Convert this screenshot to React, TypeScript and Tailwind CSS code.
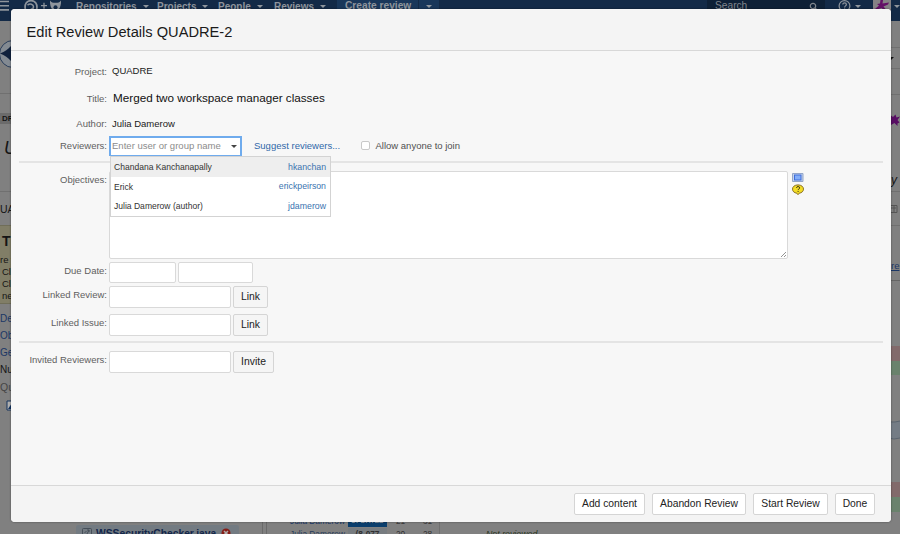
import type { ReactNode } from "react";

function NavItem({ label, className }: { label: string; className: string }) {
  return (
    <div className={`flex shrink-0 items-center gap-[6px] ${className}`}>
      <span>{label}</span>
      <Caret className="border-t-[#8f959c]" />
    </div>
  );
}

function Caret({ className }: { className: string }) {
  return <span className={`h-0 w-0 border-x-[3px] border-t-[3px] border-x-transparent ${className}`} />;
}

function NavBar() {
  return (
    <div className="flex h-[21px] w-full shrink-0 items-start bg-[#132a47] text-[10px] font-bold text-[#8f959c]">
      <div className="flex h-[12px] w-full items-center">
        <svg className="h-[12px] w-[76px] shrink-0" viewBox="0 0 76 12" fill="none" stroke="#8f959c">
          <path d="M0 1.5h9M0 5.7h9M0 9.9h9" strokeWidth="1.6" />
          <path d="M25.5 10C24 4 27 .6 31 .6s7 3.5 5.6 9.4" strokeWidth="1.7" />
          <path d="M27.5 5.2c2.4-2 6-1 6 1.6 0 1.8-1.5 2.5-2.8 2.5" strokeWidth="1.5" />
          <path d="M41 5.7h6M44 2.7v6" strokeWidth="1.3" />
          <path d="M50 .5c1.5 2 2.8 2.3 5.5 2.3S59.500 2.500 61 .5c.3 4-.8 7-2.500 9.500h-6C50.800 7.500 49.700 4.500 50 .5z" fill="#8f959c" stroke="none" />
          <circle cx="55.500" cy="7.200" r="2" fill="#132a47" stroke="none" />
        </svg>
        <NavItem label="Repositories" className="w-[81px]" />
        <NavItem label="Projects" className="w-[61px]" />
        <NavItem label="People" className="w-[56px]" />
        <NavItem label="Reviews" className="w-[63px]" />
        <div className="flex h-[12px] w-[102px] shrink-0 items-center bg-[#19375a]">
          <span className="w-[81px] pl-[8px] text-[10.200px]">Create review</span>
          <span className="flex h-[12px] flex-1 items-center border-l border-[#132a47] pl-[7px]">
            <Caret className="border-t-[#8f959c]" />
          </span>
        </div>
        <div className="ml-[268px] flex h-[12px] w-[118px] shrink-0 items-center justify-between bg-[#0e2036] pr-[7px] pl-[8px] font-normal">
          <span className="text-[10.200px] text-[#81868d]">Search</span>
          <svg className="h-[9px] w-[9px]" viewBox="0 0 9 9" fill="none" stroke="#81868d">
            <circle cx="4" cy="4" r="2.700" strokeWidth="1.200" />
            <path d="M6 6l2.500 2.500" strokeWidth="1.300" />
          </svg>
        </div>
        <svg className="ml-[13px] h-[12px] w-[13px] shrink-0" viewBox="0 0 13 12" fill="none" stroke="#8f959c" strokeWidth="1.200">
          <circle cx="6.500" cy="6" r="5.400" />
          <path d="M4.800 4.600c0-2.300 3.600-2.300 3.600 0 0 1.300-1.800 1.300-1.800 2.800M6.600 8.400v1.200" />
        </svg>
        <div className="ml-[4px] w-[17px]">
          <Caret className="block border-t-[#8f959c]" />
        </div>
        <svg className="ml-[1px] h-[14px] w-[18px] shrink-0 self-start" viewBox="0 0 18 14">
          <path d="M0 0h18v14H0z" fill="#858285" />
          <path d="M10 0L9.500 3.500 16 2.500 15 4.500 10.500 6.500 13 9.500 11.500 10.500 8.500 8 3 10 2 9 6 5.500 4 4 7 3.500 7.500 0z" fill="#641067" />
        </svg>
        <div className="ml-[3px]">
          <Caret className="block border-t-[#8f959c]" />
        </div>
      </div>
    </div>
  );
}

function LeftEdge() {
  return (
    <div className="flex w-[12px] shrink-0 flex-col overflow-hidden text-[10px] whitespace-nowrap text-[#151515]">
      <div className="h-[73px] shrink-0 border-b border-[#707070] pt-[18px]">
        <svg className="h-[30px] w-[30px]" viewBox="0 0 30 30">
          <circle cx="13" cy="15" r="13.500" fill="#838a92" stroke="#293d5a" />
          <path d="M0 14.500C5 13 8 10 11 7v15c-3-3-6-6-11-7.500z" fill="#10213d" />
        </svg>
      </div>
      <div className="mt-[19px] h-[11px] shrink-0 bg-[#6b6b6b] pl-[2px] text-[8px] leading-[12px] font-bold">DR</div>
      <div className="mt-[14px] h-[20px] shrink-0 pl-[4px] text-[18px] leading-[20px] italic">U</div>
      <div className="mt-[33px] h-[34px] shrink-0 border-t border-[#707070] text-[10.500px] leading-[34px]">UA</div>
      <div className="h-[79px] shrink-0 border-y border-[#706e59] bg-[#817e67]">
        <div className="h-[28px] pt-[4px] pl-[2px] text-[14px] leading-[23px] font-bold">T</div>
        <div className="h-[12px] text-[9.500px] leading-[12px]">re y</div>
        <div className="h-[12px] pl-[2px] text-[9.500px] leading-[12px]">Cl</div>
        <div className="h-[12px] pl-[2px] text-[9.500px] leading-[12px]">Cl</div>
        <div className="h-[12px] pl-[2px] text-[9.500px] leading-[12px]">ne</div>
      </div>
      <div className="mt-[6px] h-[17px] shrink-0 leading-[17px] text-[#1b3766]">De</div>
      <div className="h-[17px] shrink-0 leading-[17px] text-[#1b3766]">Ob</div>
      <div className="h-[17px] shrink-0 leading-[17px] text-[#1b3766]">Ge</div>
      <div className="h-[17px] shrink-0 leading-[17px]">Nu</div>
      <div className="h-[19px] shrink-0 text-[10.500px] leading-[19px] text-[#454545]">Qu</div>
      <svg className="mt-[3px] h-[11px] w-[12px] shrink-0" viewBox="0 0 12 11">
        <path d="M7 1h5v9H7z" fill="#b0b0b0" stroke="#16345f" strokeWidth="1" />
        <path d="M8 9l4-6v6z" fill="#10315f" />
      </svg>
    </div>
  );
}

function RightEdge() {
  return (
    <div className="flex w-[9px] shrink-0 flex-col overflow-hidden text-[10px]">
      <div className="h-[27px] shrink-0 border-b border-[#707070]" />
      <div className="flex h-[21px] shrink-0 items-center border-b border-[#707070]">
        <Caret className="-ml-[3px] border-t-[#111]" />
      </div>
      <div className="h-[26px] shrink-0 border-b border-[#707070]" />
      <svg className="mt-[17px] h-[15px] w-[9px] shrink-0" viewBox="0 0 9 15">
        <path d="M0 3.500L2 5 4.500 2.500 5.500 5.500 9 4.500 6.500 8 8.500 10.500 6.500 11.500 6.500 14 3.500 11 0 13z" fill="#570d63" />
      </svg>
      <div className="mt-[44px] h-[20px] shrink-0 text-[12px] leading-[18px] text-[#151515] italic">y</div>
      <div className="flex h-[35px] shrink-0 items-center border-y border-[#707070]">
        <svg className="h-[8px] w-[7px]" viewBox="0 0 7 8" fill="none" stroke="#555">
          <path d="M0 .5h6v7H0M0 3h5M3 1v6" />
        </svg>
      </div>
      <div className="h-[55px] shrink-0 border-b border-[#656565] pt-[32px] text-[9.500px] leading-[15px] text-[#1b3766] underline">re</div>
      <div className="mt-[65px] h-[15px] shrink-0 bg-[#826a6b]" />
      <div className="h-[14px] shrink-0 bg-[#6a826d]" />
      <svg className="mt-[45px] h-[20px] w-[9px] shrink-0" viewBox="0 0 9 20">
        <path d="M0 2l9-1v17l-9 1z" fill="#747c85" />
        <path d="M0 2l4 0 5-1M0 18.500l3 .5 6-1" fill="none" stroke="#5a646f" />
      </svg>
      <div className="mt-[42px] h-[15px] shrink-0 bg-[#826a6b]" />
      <div className="h-[15px] shrink-0 bg-[#6a826d]" />
    </div>
  );
}

function BottomEdge() {
  return (
    <div className="flex h-[22px] w-full overflow-hidden whitespace-nowrap">
      <div className="mt-[13px] ml-[64px] flex h-[20px] w-[163px] shrink-0 items-start rounded-t-[2px] bg-[#737b82] pt-[3px] pl-[6px]">
        <svg className="h-[10px] w-[10px]" viewBox="0 0 10 10" fill="none" stroke="#464f59">
          <rect x=".5" y=".5" width="9" height="9" rx="1" />
          <path d="M2.500 5l2-2M5 6l2-4M5 2h2v2" />
        </svg>
        <span className="ml-[4px] w-[121px] text-[10.300px] leading-[12px] font-bold text-[#12264a]">WSSecurityChecker.java</span>
        <svg className="ml-[4px] h-[10px] w-[10px]" viewBox="0 0 10 10">
          <circle cx="5" cy="5" r="4.500" fill="#861e18" />
          <path d="M3 3l4 4M7 3l-4 4" stroke="#b0aaa9" strokeWidth="1.500" />
        </svg>
      </div>
      <div className="ml-[23px] w-[5px] shrink-0 border-x border-[#6a6a6a]" />
      <div className="flex w-[173px] shrink-0 flex-col border-r border-[#707070] pt-[3px] pl-[23px] text-[8.300px]">
        <div className="flex h-[12px] shrink-0 items-center">
          <span className="w-[58px] text-[#1b3766]">Julia Damerow</span>
          <span className="h-[12px] w-[39px] bg-[#0b3e6c] text-center text-[7px] leading-[12px] font-bold text-[#8b98a5]">UPDATED</span>
          <span className="ml-[9px] w-[27px] text-[#3b3b3b]">21</span>
          <span className="text-[#3b3b3b]">31</span>
        </div>
        <div className="flex h-[14px] shrink-0 items-center text-[#303030]">
          <span className="w-[58px] text-[#263b59]">Julia Damerow</span>
          <span className="w-[39px] bg-[#777c80] text-center font-bold">(8-077</span>
          <span className="ml-[9px] w-[27px]">20</span>
          <span>28</span>
        </div>
      </div>
      <div className="ml-[46px] pt-[16px] text-[8.800px] leading-[13px] text-[#29351e] italic">Not reviewed</div>
    </div>
  );
}

function Field({ label, className, labelClass, children }: { label: string; className: string; labelClass: string; children: ReactNode }) {
  return (
    <div className={`flex items-start ${className}`}>
      <div className={`w-[96px] shrink-0 text-right text-[9.500px] leading-[12px] whitespace-nowrap text-[#606060] ${labelClass}`}>{label}</div>
      {children}
    </div>
  );
}

function TextBox({ className }: { className: string }) {
  return <input className={`block shrink-0 rounded-[2px] border border-[#d9d9d9] bg-white ${className}`} />;
}

function SideButton({ label, className }: { label: string; className: string }) {
  return (
    <button className={`ml-[2px] h-[22px] shrink-0 rounded-[2px] border border-[#d5d5d5] bg-[#f5f5f5] text-[10.400px] leading-[20px] text-[#222] ${className}`}>
      {label}
    </button>
  );
}

function FooterButton({ label, className }: { label: string; className: string }) {
  return (
    <button className={`h-[22px] shrink-0 rounded-[2px] border border-[#d5d5d5] bg-white text-[10.300px] leading-[20px] whitespace-nowrap text-[#222] ${className}`}>
      {label}
    </button>
  );
}

const people = [
  { name: "Chandana Kanchanapally", login: "hkanchan", row: "bg-[#eeeeee]" },
  { name: "Erick", login: "erickpeirson", row: "bg-white" },
  { name: "Julia Damerow (author)", login: "jdamerow", row: "bg-white" },
];

function ReviewerPicker() {
  return (
    <div className="relative ml-[2px] h-[20px] w-[133px] shrink-0">
      <div className="flex h-[20px] w-[133px] items-center justify-between border-2 border-b border-[#6fabed] bg-white pr-[3px] pl-[1px]">
        <span className="text-[9.550px] whitespace-nowrap text-[#8c8c8c]">Enter user or group name</span>
        <Caret className="border-t-[#444]" />
      </div>
      <div className="absolute top-[20px] left-[1px] z-10 h-[61px] w-[221px] border border-[#d3d3d3] bg-white">
        {people.map((p) => (
          <div key={p.login} className={`flex h-[19.700px] items-center justify-between pt-[1px] pr-[4px] pl-[3px] text-[8.550px] whitespace-nowrap ${p.row}`}>
            <span className="text-[#333]">{p.name}</span>
            <span className="text-[8.750px] text-[#3b73af]">{p.login}</span>
          </div>
        ))}
      </div>
    </div>
  );
}

function Dialog() {
  return (
    <div className="absolute top-[9px] left-[11px] flex h-[513px] w-[880px] flex-col overflow-hidden rounded-[4px] bg-[#f7f7f7] shadow-[0_0_2px_rgba(0,0,0,0.5)]">
      <div className="flex h-[42px] shrink-0 items-center border-b border-[#d8d8d8] bg-[#f4f4f4] pt-[6px] pl-[15.500px] text-[14.650px] text-[#1a1a1a]">
        Edit Review Details QUADRE-2
      </div>
      <div className="flex h-[434px] shrink-0 flex-col pt-[11px]">
        <Field label="Project:" className="h-[24px]" labelClass="pt-[4px]">
          <span className="ml-[5px] pt-[3px] text-[9.500px] leading-[12px] text-[#1a1a1a]">QUADRE</span>
        </Field>
        <Field label="Title:" className="h-[28px]" labelClass="pt-[7px]">
          <span className="ml-[6px] pt-[4px] text-[11.700px] leading-[16px] text-[#111]">Merged two workspace manager classes</span>
        </Field>
        <Field label="Author:" className="h-[22px]" labelClass="pt-[4px]">
          <span className="ml-[5px] pt-[4px] text-[9.500px] leading-[12px] text-[#1a1a1a]">Julia Damerow</span>
        </Field>
        <Field label="Reviewers:" className="h-[25px]" labelClass="pt-[4px]">
          <ReviewerPicker />
          <a className="ml-[12px] w-[107px] pt-[4px] text-[9.500px] leading-[12px] text-[#3068a9]">Suggest reviewers...</a>
          <span className="mt-[5px] h-[9px] w-[9px] rounded-[2px] border border-[#c9c9c9] bg-white" />
          <span className="ml-[5.500px] pt-[4px] text-[9.500px] leading-[12px] text-[#505050]">Allow anyone to join</span>
        </Field>
        <div className="mx-[8px] h-[2px] shrink-0 bg-[#e4e4e4]" />
        <Field label="Objectives:" className="mt-[8px] h-[91px]" labelClass="pt-[3px]">
          <div className="ml-[2px] flex h-[88px] w-[679px] items-end justify-end rounded-[2px] border border-[#d9d9d9] bg-white">
            <svg className="h-[7px] w-[7px]" viewBox="0 0 7 7" stroke="#777" strokeWidth=".8">
              <path d="M1 6l5-5M4 6l2-2" />
            </svg>
          </div>
          <div className="ml-[4px] flex flex-col gap-[2px] pt-[2px]">
            <svg className="h-[9px] w-[12px]" viewBox="0 0 12 9">
              <path d="M.5 .5h10.500v8H.5z" fill="#c6d4ea" stroke="#92a5c8" />
              <path d="M2 1.500h7.500v6H2z" fill="#3f6cda" />
              <path d="M3 2.500h5.500v4H3z" fill="#82adf9" />
            </svg>
            <svg className="h-[12px] w-[12px]" viewBox="0 0 12 12">
              <path d="M6 .9c3.300 0 5.500 1.800 5.500 4.200 0 2.200-1.800 3.800-4.300 4.100L6 10.700 4.800 9.200C2.300 8.900.5 7.300.5 5.100.5 2.700 2.700.9 6 .9z" fill="#f2dc25" stroke="#8b7125" />
              <path d="M4.500 3.900c0-1.900 3.200-1.800 3.200 0C7.700 5 6.100 4.900 6.100 6.100M6.100 7v1" fill="none" stroke="#3e3513" />
            </svg>
          </div>
        </Field>
        <Field label="Due Date:" className="h-[24px]" labelClass="pt-[3px]">
          <TextBox className="ml-[2px] h-[21px] w-[67px]" />
          <TextBox className="ml-[2px] h-[21px] w-[75px]" />
        </Field>
        <Field label="Linked Review:" className="h-[28px]" labelClass="pt-[3px]">
          <TextBox className="ml-[2px] h-[22px] w-[122px]" />
          <SideButton label="Link" className="w-[35px]" />
        </Field>
        <Field label="Linked Issue:" className="h-[27px]" labelClass="pt-[3px]">
          <TextBox className="ml-[2px] h-[22px] w-[122px]" />
          <SideButton label="Link" className="w-[35px]" />
        </Field>
        <div className="mx-[8px] h-[2px] shrink-0 bg-[#e4e4e4]" />
        <Field label="Invited Reviewers:" className="mt-[8px] h-[24px]" labelClass="pt-[3px]">
          <TextBox className="ml-[2px] h-[22px] w-[122px]" />
          <SideButton label="Invite" className="w-[41px]" />
        </Field>
      </div>
      <div className="flex flex-1 items-start justify-end gap-[7px] border-t border-[#d8d8d8] bg-[#f4f4f4] pt-[7px] pr-[16px]">
        <FooterButton label="Add content" className="w-[71px]" />
        <FooterButton label="Abandon Review" className="w-[94px]" />
        <FooterButton label="Start Review" className="w-[75px]" />
        <FooterButton label="Done" className="w-[40px]" />
      </div>
    </div>
  );
}

export default function App() {
  return (
    <div className="relative flex h-[534px] w-[900px] flex-col overflow-hidden bg-[#808080] font-['Liberation_Sans',Arial,sans-serif]">
      <NavBar />
      <div className="flex h-[513px] shrink-0">
        <LeftEdge />
        <div className="flex min-w-0 flex-1 flex-col justify-end">
          <BottomEdge />
        </div>
        <RightEdge />
      </div>
      <Dialog />
    </div>
  );
}
